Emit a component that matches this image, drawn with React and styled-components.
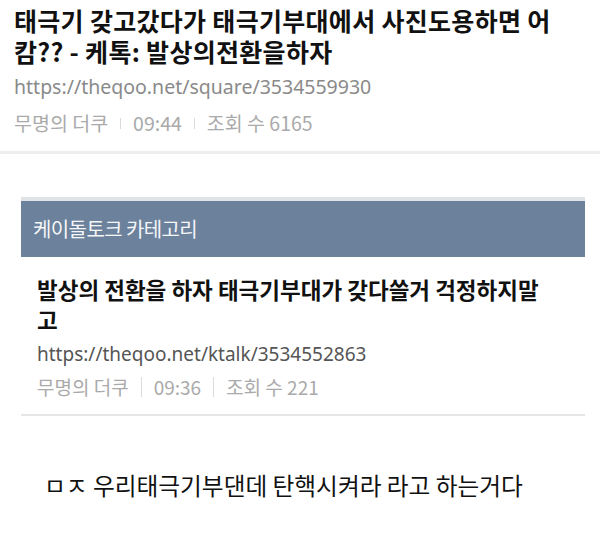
import React from "react"
import styled, { createGlobalStyle } from "styled-components"

const GlobalStyle = createGlobalStyle`
  html, body {
    margin: 0;
    padding: 0;
    background: #fff;
  }
  body {
    font-family: "Noto Sans CJK KR", "Noto Sans", sans-serif;
    color: #111;
  }
`

const Page = styled.div`
  width: 600px;
  height: 553px;
  overflow: hidden;
  background: #fff;
`

const TopPost = styled.section`
  padding: 5px 14px 15px;
  border-bottom: 3px solid #eeeeee;
`

const Title = styled.h1`
  margin: 0;
  font-size: ${props => props.size}px;
  line-height: ${props => props.lh}px;
  letter-spacing: ${props => props.ls}px;
  font-weight: 700;
  color: #111;
`

const Url = styled.div`
  margin-top: ${props => props.gap}px;
  font-family: "Noto Sans", "Noto Sans CJK KR", sans-serif;
  font-size: ${props => props.size}px;
  line-height: 26px;
  color: ${props => props.color};
`

const Meta = styled.div`
  display: flex;
  align-items: center;
  margin-top: ${props => props.gap}px;
  font-size: ${props => props.size}px;
  line-height: 26px;
  color: #aaaaaa;
`

const Sep = styled.span`
  display: inline-block;
  width: 1px;
  height: ${props => props.h}px;
  background: #dadada;
  margin: 0 12px;
`

const Card = styled.section`
  margin: 43px 15px 0 21px;
  border-top: 4px solid #dfe2e6;
`

const CardHead = styled.div`
  background: #6c819c;
  color: #f4f6f8;
  font-size: 20px;
  height: 54px;
  display: flex;
  align-items: center;
  padding: 0 0 2px 12px;
  letter-spacing: -0.6px;
`

const CardBody = styled.div`
  padding: 17px 40px 14px 16px;
  border-bottom: 2px solid #e6e6e6;
`

const Comment = styled.p`
  margin: 53px 0 0 44px;
  font-size: 23.7px;
  line-height: 32px;
  color: #111;
`

export default function App() {
  return (
    <Page>
      <GlobalStyle />
      <TopPost>
        <Title size={25} lh={31} ls={0.3}>
          태극기 갖고갔다가 태극기부대에서 사진도용하면 어캄?? - 케톡: 발상의전환을하자
        </Title>
        <Url gap={7} size={19.5} color="#8a8a8a">https://theqoo.net/square/3534559930</Url>
        <Meta gap={10} size={19.5}>
          <span>무명의 더쿠</span>
          <Sep h={11} />
          <span>09:44</span>
          <Sep h={11} />
          <span>조회 수 6165</span>
        </Meta>
      </TopPost>
      <Card>
        <CardHead>케이돌토크 카테고리</CardHead>
        <CardBody>
          <Title size={22.5} lh={30} ls={0}>
            발상의 전환을 하자 태극기부대가 갖다쓸거 걱정하지말고
          </Title>
          <Url gap={7} size={19} color="#555555">https://theqoo.net/ktalk/3534552863</Url>
          <Meta gap={7} size={19}>
            <span>무명의 더쿠</span>
            <Sep h={20} />
            <span>09:36</span>
            <Sep h={20} />
            <span>조회 수 221</span>
          </Meta>
        </CardBody>
      </Card>
      <Comment>ㅁㅈ 우리태극기부댄데 탄핵시켜라 라고 하는거다</Comment>
    </Page>
  )
}
